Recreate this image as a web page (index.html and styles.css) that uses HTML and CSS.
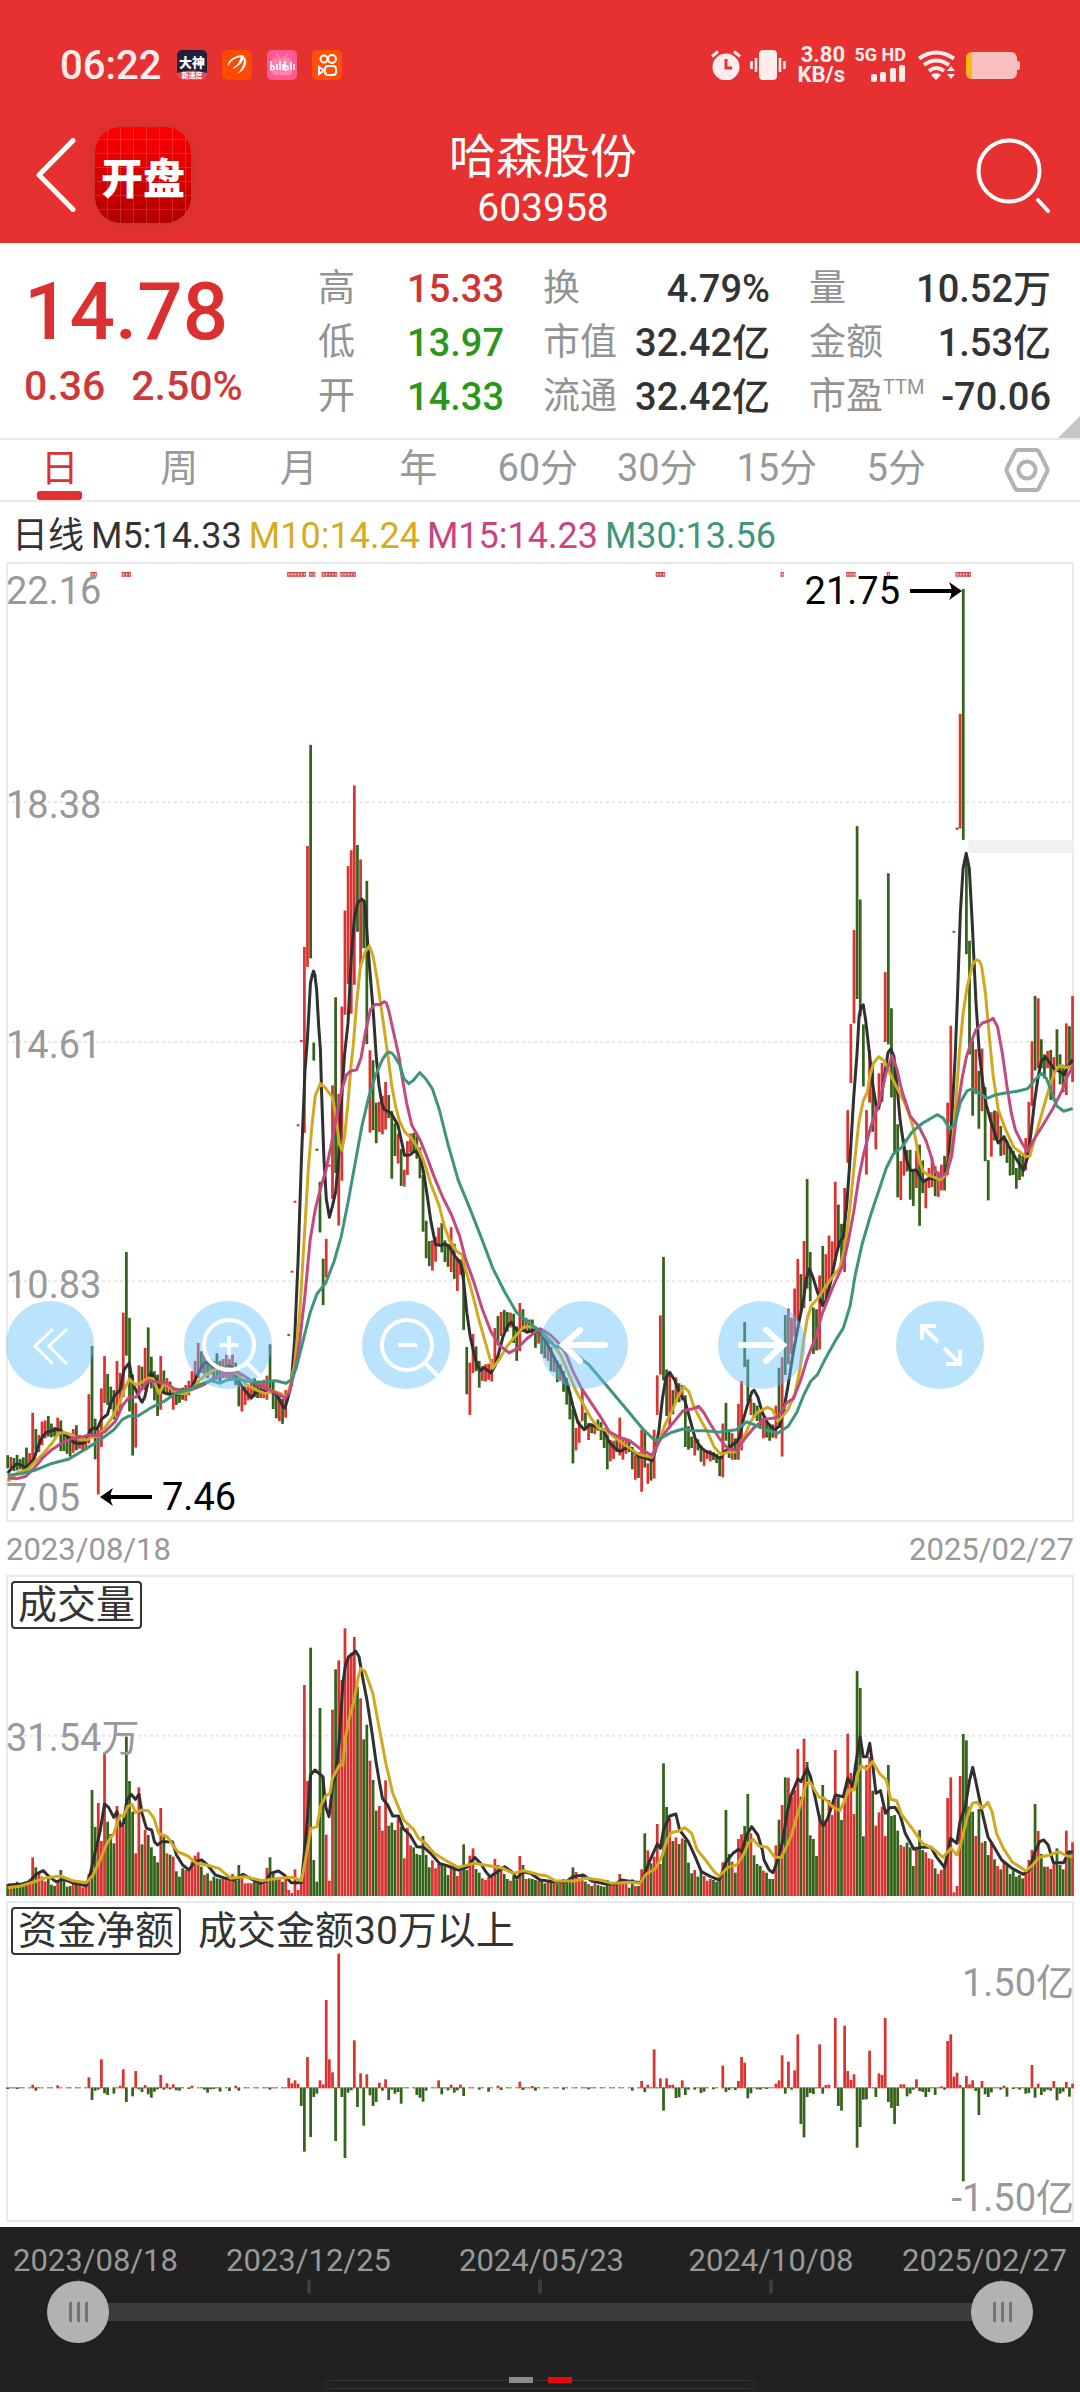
FILE: index.html
```html
<!DOCTYPE html>
<html lang="zh-CN">
<head>
<meta charset="utf-8">
<meta name="viewport" content="width=device-width, initial-scale=1">
<title>哈森股份 603958</title>
<link rel="stylesheet" href="styles.css">
</head>
<body>
<header class="top">
  <div class="status">
    <span class="clock">06:22</span>
    <div class="apps">
      <svg width="30" height="30" viewBox="0 0 30 30"><rect width="30" height="30" rx="5" fill="#20203c"/><path d="M0 23q15-5 30 0v2a5 5 0 0 1-5 5H5a5 5 0 0 1-5-5z" fill="#e5484d"/><text x="15" y="17" class="mini-lg">大神</text><text x="15" y="28" class="mini-sm">新速度</text></svg>
      <svg width="30" height="30" viewBox="0 0 30 30"><rect width="30" height="30" rx="5" fill="#ff4a00"/><g fill="#fff"><path d="M6 14Q8 7 19 5q2 0 0 2-9 1-13 9z"/><path d="M11 18Q18 13 19 6l2-1q2 1 0 5-3 6-10 9z"/><path d="M15 24q7-6 7-17 3 2 2 7-2 7-9 10z"/></g></svg>
      <svg width="30" height="30" viewBox="0 0 30 30"><rect width="30" height="30" rx="5" fill="#ff5a93"/><rect x="5" y="8" width="20" height="17" rx="4" fill="#ff82ae"/><path d="M9 4l4 4M21 4l-4 4" stroke="#ff82ae" stroke-width="2"/><path d="M4 11v9q4 0 3-3-1-2-3 0M10 14v6M13 11v9M16 14v6M18 11v9q4 0 3-3-1-2-3 0M24 12v8M27 14v6" fill="none" stroke="#fff" stroke-width="1.600"/></svg>
      <svg width="30" height="30" viewBox="0 0 30 30"><rect width="30" height="30" rx="5" fill="#ff500a"/><g fill="none" stroke="#fff" stroke-width="2"><circle cx="12" cy="9" r="3.500"/><circle cx="20" cy="9" r="4"/><rect x="13" y="16" width="11" height="9" rx="3"/><path d="M7 17v7l5-3.500z"/></g></svg>
    </div>
    <div class="system">
      <svg class="i-alarm" width="30" height="30" viewBox="0 0 30 30"><circle cx="15" cy="17" r="13.500" fill="#ffecec"/><path d="M1 6.500l6-5M29 6.500l-6-5" stroke="#ffecec" stroke-width="3"/><path d="M15 9v9h6" fill="none" stroke="#e63232" stroke-width="3"/></svg>
      <svg class="i-vibrate" width="36" height="30" viewBox="0 0 36 30"><rect x="9" width="18" height="30" rx="4" fill="#ffecec"/><path d="M1.500 11v8M6 8v14M30 8v14M34.500 11v8" stroke="#ffecec" stroke-width="2.600"/></svg>
      <p class="rate">3.80<br>KB/s</p>
      <div class="signal"><span>5G HD</span>
        <svg width="36" height="17" viewBox="0 0 36 17" fill="#ffecec"><rect x="1" y="9" width="6" height="8" rx="2"/><rect x="10" y="7" width="6" height="10" rx="2"/><rect x="20" y="3" width="6" height="14" rx="2"/><rect x="29" width="6" height="17" rx="2"/></svg></div>
      <svg class="i-wifi" width="37" height="30" viewBox="0 0 37 30"><g fill="none" stroke="#ffecec" stroke-width="4"><path d="M1 8.500q17-12 35 0M6 15q12-9 25 0M11 21q7-6 15 0"/></g><path d="M13 25q5-4 10 0l-5 5zM29 21l4-5 4 5zM29 24h8l-4 5z" fill="#ffecec"/></svg>
      <svg width="54" height="27" viewBox="0 0 54 27"><rect width="51" height="27" rx="6" fill="#f7bfc0"/><path d="M51 9h1q2 0 2 2v5q0 2-2 2h-1z" fill="#f7bfc0"/><path d="M6 0v27a6 6 0 0 1-6-6V6a6 6 0 0 1 6-6z" fill="#fdb515"/></svg>
    </div>
  </div>
  <div class="title-row">
    <div class="title-left">
      <button class="plain" aria-label="返回"><svg width="40" height="74" viewBox="0 0 40 74"><path d="M37 2.500L3 37l34 34.500" fill="none" stroke="#fff" stroke-width="5" stroke-linecap="round" stroke-linejoin="round"/></svg></button>
      <button class="logo">开盘</button>
    </div>
    <div class="title"><h1>哈森股份</h1><p>603958</p></div>
    <button class="plain search" aria-label="搜索"><svg width="74" height="78" viewBox="0 0 74 78"><g fill="none" stroke="#fff" stroke-linecap="round"><circle cx="33" cy="35" r="30.500" stroke-width="4"/><path d="M62 64l10 11" stroke-width="4"/></g></svg></button>
  </div>
</header>

<section class="quote">
  <div class="price"><strong>14.78</strong><p><span>0.36</span><span>2.50%</span></p></div>
  <dl><div><dt>高</dt><dd class="up">15.33</dd></div><div><dt>低</dt><dd class="down">13.97</dd></div><div><dt>开</dt><dd class="down">14.33</dd></div></dl>
  <dl><div><dt>换</dt><dd>4.79%</dd></div><div><dt>市值</dt><dd>32.42亿</dd></div><div><dt>流通</dt><dd>32.42亿</dd></div></dl>
  <dl><div><dt>量</dt><dd>10.52万</dd></div><div><dt>金额</dt><dd>1.53亿</dd></div><div><dt>市盈<sup>TTM</sup></dt><dd>-70.06</dd></div></dl>
</section>

<nav class="tabs">
  <button class="active">日</button><button>周</button><button>月</button><button>年</button><button>60分</button><button>30分</button><button>15分</button><button>5分</button>
  <button class="settings" aria-label="设置"><svg width="46" height="46" viewBox="0 0 46 46" fill="none" stroke="#b2b2b2" stroke-width="4"><path d="M14 3h18q2 0 3 2l8 16q1 2 0 4l-8 16q-1 2-3 2H14q-2 0-3-2L3 25q-1-2 0-4l8-16q1-2 3-2z"/><circle cx="23" cy="23" r="8.500"/></svg></button>
</nav>

<main>
  <p class="legend"><span>日线</span><span>M5:14.33</span><span class="m10">M10:14.24</span><span class="m15">M15:14.23</span><span class="m30">M30:13.56</span></p>

  <section class="panel panel-price">
    <svg id="price" class="plot" viewBox="17 -1330 3101 2788" preserveAspectRatio="none"></svg>
    <span class="tag p1">22.16</span><span class="tag p2">18.38</span><span class="tag p3">14.61</span><span class="tag p4">10.83</span><span class="tag p5">7.05</span>
    <span class="note high">21.75 <svg width="53" height="20" viewBox="0 0 53 20"><path d="M0 10h48" stroke="#000" stroke-width="4"/><path d="M39 1l13 9-13 9q5-9 0-18z" fill="#000"/></svg></span>
    <span class="note low"><svg width="52" height="20" viewBox="0 0 52 20"><path d="M52 10H5" stroke="#000" stroke-width="4"/><path d="M13 1L0 10l13 9q-5-9 0-18z" fill="#000"/></svg> 7.46</span>
    <div class="tools">
      <button aria-label="后退"><svg viewBox="0 0 88 88"><path d="M47 28L29 45l18 18M61 28L43 45l18 18" stroke-width="3"/></svg></button>
      <button aria-label="放大"><svg viewBox="0 0 88 88"><circle cx="45" cy="44" r="25" stroke-width="4"/><path d="M63 62l15 15M45 35v19M35.500 44h19" stroke-width="4"/></svg></button>
      <button aria-label="缩小"><svg viewBox="0 0 88 88"><circle cx="45" cy="44" r="25" stroke-width="4"/><path d="M63 62l15 15M36 44h19" stroke-width="4"/></svg></button>
      <button aria-label="左移"><svg viewBox="0 0 88 88"><path d="M65 44H23M40 29L23 44l17 16" stroke-width="6" stroke-linecap="round"/></svg></button>
      <button aria-label="右移"><svg viewBox="0 0 88 88"><path d="M23 44h42M48 29l17 15-17 16" stroke-width="6" stroke-linecap="round"/></svg></button>
      <button aria-label="全屏"><svg viewBox="0 0 88 88"><path d="M42 41L26 25M26 39V25h14M48 47l16 16M64 49v14H50" stroke-width="4"/></svg></button>
    </div>
  </section>

  <p class="dates"><time>2023/08/18</time><time>2025/02/27</time></p>

  <section class="panel panel-volume">
    <svg id="volume" class="plot" viewBox="17 45 3101 963" preserveAspectRatio="none"></svg>
    <h2 class="caption"><button>成交量</button></h2>
    <span class="tag v1">31.54万</span>
  </section>

  <section class="panel panel-flow">
    <svg id="flow" class="plot" viewBox="17 33 3101 963" preserveAspectRatio="none"></svg>
    <h2 class="caption"><button>资金净额</button><span>成交金额30万以上</span></h2>
    <span class="tag f1">1.50亿</span><span class="tag f2">-1.50亿</span>
  </section>
</main>

<footer class="range">
  <div class="range-dates"><time>2023/08/18</time><time>2023/12/25</time><time>2024/05/23</time><time>2024/10/08</time><time>2025/02/27</time></div>
  <div class="ticks"><i></i><i></i><i></i><i></i><i></i></div>
  <div class="slider">
    <input type="range" min="0" max="100" value="0" aria-label="开始日期">
    <input type="range" min="0" max="100" value="100" aria-label="结束日期">
  </div>
  <div class="pager"><i></i><i class="on"></i></div>
  <div class="home-bar"></div>
</footer>
<script src="chart.js"></script>
</body>
</html>
```
FILE: styles.css
```css
* { box-sizing: border-box; }
body { margin: 0; background: #fff; color: #333; font-family: Roboto, "Noto Sans CJK SC", sans-serif; }
h1, h2, p, dl, dd { margin: 0; font-weight: 400; }
button { font: inherit; color: inherit; background: none; border: 0; padding: 0; }
svg { display: block; flex: none; }

.top { background: #e73131; color: #fff; }
.status { display: flex; align-items: center; height: 127px; padding: 3px 60px 0 60px; color: #ffecec; }
.clock { width: 117px; font-size: 40px; font-weight: 500; }
.apps { display: flex; gap: 15px; }
.mini-lg { font-size: 13px; font-weight: 900; fill: #fff; text-anchor: middle; }
.mini-sm { font-size: 7px; font-weight: 700; fill: #fff; text-anchor: middle; }
.system { display: flex; align-items: center; margin-left: auto; }
.i-alarm { margin-right: 9px; }
.i-vibrate { margin-right: 11px; }
.rate { width: 48px; text-align: right; font-size: 22px; line-height: 20px; font-weight: 700; }
.signal { display: flex; flex-direction: column; align-items: flex-end; gap: 3px; margin: 0 12px 0 11px; width: 50px; font-size: 18px; line-height: 14px; font-weight: 700; white-space: nowrap; }
.i-wifi { margin-right: 11px; }
.title-row { display: grid; grid-template-columns: 1fr auto 1fr; align-items: start; height: 116px; padding: 0 30px 0 36px; }
.title-left { display: flex; align-items: center; gap: 19px; }
.logo { width: 96px; height: 96px; border-radius: 26px; font-size: 42px; font-weight: 900; color: #fff;
  background: repeating-linear-gradient(90deg, transparent 0 12px, rgba(255,255,255,.16) 12px 13px), repeating-linear-gradient(0deg, transparent 0 13px, rgba(255,255,255,.14) 13px 14px), linear-gradient(#ff0000, #b00000);
  box-shadow: 0 0 18px rgba(100,60,60,.3); }
.title { padding-top: 4px; text-align: center; }
.title h1 { font-size: 47px; line-height: 52px; }
.title p { font-size: 39px; line-height: 50px; }
.search { justify-self: end; margin-top: 9px; }

.quote { position: relative; display: grid; grid-template-columns: 255fr 186fr 227fr 242fr; column-gap: 39px; height: 197px; padding: 19px 29px 0 24px; border-bottom: 2px solid #e9e9e9; }
.quote::after { content: ""; position: absolute; right: 0; bottom: 0; border: solid transparent; border-width: 0 0 22px 22px; border-bottom-color: #c6c6c6; }
.price { padding-top: 8px; color: #dc2f2f; }
.price strong { display: block; font-size: 80px; line-height: 84px; font-weight: 500; }
.price p { display: flex; gap: 26px; padding-top: 4px; font-size: 41px; line-height: 56px; font-weight: 500; color: #d03838; }
.quote dl div { display: flex; justify-content: space-between; height: 54px; line-height: 54px; white-space: nowrap; }
dt { font-size: 37px; color: #939393; }
sup { font-size: 20px; line-height: 20px; vertical-align: 15px; }
dd { font-size: 38px; font-weight: 500; }
dd.up { color: #d03535; }
dd.down { color: #2b961b; }

.tabs { display: grid; grid-template-columns: repeat(8, 239fr) 248fr; height: 62px; border-bottom: 2px solid #e9e9e9; font-size: 38px; line-height: 56px; color: #999; }
.tabs button { position: relative; white-space: nowrap; line-height: 56px; height: 60px; padding-bottom: 4px; }
.tabs .active { color: #dc3232; }
.tabs .active::after { content: ""; position: absolute; left: calc(50% - 23px); bottom: 0; width: 45px; height: 9px; border-radius: 3px; background: #e03030; }
.tabs .settings { display: grid; place-items: center; padding: 0 0 0 17px; }

.legend { display: flex; gap: 7px; height: 60px; padding: 7px 12px 0; font-size: 36px; line-height: 54px; white-space: nowrap; }
.m10 { color: #d6ac22; }
.m15 { color: #c9457f; }
.m30 { color: #3e967c; }

.panel { position: relative; margin: 0 6px; }
.panel::before { content: ""; position: absolute; inset: 0; border: 2px solid #e9e9e9; }
.panel-price { height: 960px; }
.panel-volume { height: 321px; }
.panel-volume::before { border-bottom: 0; }
.panel-flow { height: 321px; margin-top: 5px; }
.plot { position: absolute; inset: 0; width: 100%; height: 100%; }
.plot .rise { fill: #d93432; }
.plot .fall { fill: #34631a; }
.plot .flag { fill: #cc4040; }
.plot .pin { fill: #ffdada; }
.plot .gap { fill: #f1f1f1; }
.plot polyline { fill: none; stroke-width: 3px; stroke-linejoin: round; vector-effect: non-scaling-stroke; }
.plot .guide { stroke: #e6e6e6; stroke-width: 2px; stroke-dasharray: 3px 3px; vector-effect: non-scaling-stroke; }
.ma5 { stroke: #303030; }
.ma10 { stroke: #d0a921; }
.ma15 { stroke: #c4497f; }
.ma30 { stroke: #3f957b; }

.tag { position: absolute; left: 0; font-size: 38px; line-height: 44px; color: #999; white-space: nowrap; }
.p1 { top: 7px; }
.p2 { top: 22%; margin-top: 10px; }
.p3 { top: 48%; }
.p4 { top: 73%; }
.p5 { bottom: 2px; }
.v1 { top: 141px; }
.f1, .f2 { left: auto; right: 0; }
.f1 { top: 60px; }
.f2 { bottom: 2px; }
.note { position: absolute; display: flex; align-items: center; gap: 10px; font-size: 38px; line-height: 44px; color: #000; }
.high { top: 7px; right: 111px; }
.low { bottom: 3px; left: 94px; }
.tools { position: absolute; left: 0; right: 0; top: 739px; display: flex; gap: 90px; }
.tools button { width: 88px; height: 88px; border-radius: 50%; background: rgba(102,193,253,.45); overflow: hidden; }
.tools svg { fill: none; stroke: #fff; }

.dates { display: flex; justify-content: space-between; height: 53px; padding: 0 6px; font-size: 31px; line-height: 56px; color: #999; }
.caption { position: relative; display: flex; align-items: center; gap: 17px; padding: 6px 5px 0; font-size: 39px; line-height: 44px; }
.caption button { height: 48px; padding: 0 5px; border: 2px solid #333; border-radius: 4px; line-height: 42px; }

.range { margin-top: 5px; padding: 15px 0 3px; background: #212121; color: #999; }
.range-dates { display: grid; grid-template-columns: 189fr 213fr 253fr 206fr 193fr; padding: 0 13px; font-size: 31px; line-height: 37px; text-align: center; }
.range-dates :first-child { text-align: left; }
.range-dates :last-child { text-align: right; }
.ticks { display: flex; justify-content: space-between; margin: 0 76px; }
.ticks i { width: 4px; height: 15px; border-radius: 2px; background: #3c3c3c; }
.slider { position: relative; height: 62px; margin: -13px 47px 0; }
.slider::before { content: ""; position: absolute; left: 31px; right: 31px; top: 22px; height: 18px; background: #3b3b3b; }
.slider input { position: absolute; inset: 0; width: 100%; height: 62px; margin: 0; appearance: none; background: none; pointer-events: none; }
.slider input::-webkit-slider-thumb { appearance: none; width: 62px; height: 62px; border: 0; border-radius: 50%; pointer-events: auto;
  background: linear-gradient(90deg, #757575 0 3px, transparent 3px 8px, #757575 8px 11px, transparent 11px 16px, #757575 16px) center / 19px 20px no-repeat #b2b2b2; }
.pager { position: relative; display: flex; justify-content: center; gap: 15px; margin-top: 34px; }
.pager i { width: 24px; height: 6px; background: #8c8c8c; }
.pager .on { background: #e60c0c; }
.home-bar { width: 40%; height: 9px; margin: -3px auto 0; border: 1px solid #343434; border-radius: 5px; }
```
FILE: chart.js
```js
// Price bars, one per trading day: r = rise, g = fall, then the high and low.
// Levels are plot steps below 14.96 yuan, 184 steps to the yuan.
const DAYS = `
g1264,1302 r1269,1300 g1272,1310 g1263,1308 g1275,1305 g1270,1312 g1242,1308 r1258,1305 r1141,1290 g1188,1250
r1205,1255 r1166,1235 r1163,1215 g1150,1210 g1172,1212 g1182,1210 r1155,1207 g1163,1252 g1200,1252 g1205,1260
g1208,1268 r1188,1257 g1177,1250 r1205,1245 r1210,1250 r1205,1250 r1087,1230 g947,1210 g1158,1276 r1190,1378
r1070,1240 r976,1112 g1028,1118 g1065,1130 g1075,1160 r990,1150 r1025,1130 r850,1095 g674,975 g865,1137
g1030,1265 r1112,1242 r1003,1095 g1007,1075 r952,1075 g893,1040 g978,1070 g1020,1105 g1030,1150 r976,1132
g1018,1085 r1040,1090 g1050,1090 r1065,1132 g1068,1118 g1070,1112 g1068,1103 r1060,1106 r1048,1090 r1020,1075
r990,1055 r938,1040 g962,1025 r970,1030 g990,1040 r985,1030 g990,1050 g968,1045 g990,1055 r985,1040
r972,1040 r985,1045 r972,1040 g995,1060 g1030,1122 r1070,1137 r1065,1118 r1060,1105 r1045,1100 g1040,1095
g1050,1098 r1055,1098 r1045,1098 r1033,1103 g942,1070 g1045,1130 g1080,1157 r1090,1165 g1100,1173 r1075,1155
r912,918 r728,734 r525,531 r303,309 r58,64 r-212,328 r-505,-154 g-799,-179 g66,118 g374,380
g470,617 g693,828 r636,748 r420,426 r190,520 g-66,445 r215,597 r-39,467 r-318,-15 r-447,-105
r-493,-18 r-681,-102 g-508,-256 r-466,-150 g-348,-208 g-404,70 r88,327 g117,320 g240,358 r238,325
r220,332 r180,318 g218,285 g265,461 g300,395 r330,417 g375,482 r435,484 r352,450 r330,385
g328,385 g335,403 g370,460 g450,615 g583,692 g642,715 r640,728 r630,702 r603,655 g590,675
g640,703 g650,717 r602,732 g650,752 r690,787 r695,740 g690,900 g950,1087 r995,1147 r912,1025
g948,1020 g990,1068 r1005,1048 r1000,1050 r998,1045 r985,1050 r895,1005 g860,945 r848,918 g842,905
g848,905 r850,893 g853,938 g890,990 r822,962 g840,905 r865,905 g870,905 g870,910 g890,952
r895,940 g905,970 g900,982 r930,990 g950,1020 r975,1022 g990,1052 r1000,1048 g1020,1080 g1040,1117
g1080,1160 g1130,1288 r1185,1250 r1165,1228 r1072,1165 g1140,1190 r1170,1220 g1172,1200 r1180,1203 g1160,1193
g1168,1220 g1185,1243 g1205,1305 r1220,1282 r1222,1275 g1205,1255 r1155,1265 r1220,1277 r1220,1260 g1225,1255
g1240,1305 r1265,1335 g1255,1330 r1190,1370 g1190,1300 r1288,1347 g1270,1338 r1190,1332 r1032,1147 r858,1030
g688,1047 g1015,1150 r1030,1180 g1075,1145 r1038,1108 g1055,1110 r1060,1105 g1090,1240 g1180,1248 g1210,1243
r1218,1265 g1218,1250 g1235,1283 r1250,1295 r1250,1275 r1250,1282 g1255,1278 g1260,1287 g1270,1325 r1172,1328
g1112,1222 g1190,1272 r1200,1277 g1215,1277 r1115,1277 r1048,1250 g877,1008 g986,1110 r1100,1147 g1112,1155
g1120,1165 g1140,1187 r1155,1215 g1160,1213 g1175,1222 g1175,1213 r1120,1215 g1010,1185 r980,1268 g857,1031
r838,1000 r865,970 r780,920 r694,875 g738,850 r642,837 g462,780 g674,817 g835,970 g840,960
r742,957 g656,830 r680,812 r626,780 r643,745 r470,690 g536,660 g592,710 r488,732 r262,415
r12,183 r-261,10 g-563,-61 g-350,-10 g13,193 r262,449 r88,240 g130,325 r235,376 r155,260
r125,238 r-139,64 g-426,71 g-34,225 g135,385 g303,515 r410,523 r345,452 g378,440 g377,522
g435,540 r380,488 g362,598 g408,503 r460,547 r430,488 r400,485 g425,512 r440,514 r420,495
g395,495 r240,450 r17,300 r-259,-253 r-559,-552 r-889,-556 g-1252,-523 g-465,-191 g-230,100 g60,278
r85,215 g148,316 r83,265 g195,410 g407,524 r268,397 g263,350 r265,345 g308,395 r335,392
g350,415 g370,452 g380,450 g430,490 g390,465 g395,455 r343,437 r238,385 r62,250 g-70,147
r-63,140 g56,140 g100,170 r90,140 g87,232 r108,235 g27,135 g100,187 g130,210 r10,218
g18,130 r-70,180`.trim().split(/\s+/);

const VOLUME = `
972 972 975 965 972 972 970 958 892 922 940 950 964 957 974 978 963 930 962 980
978 960 965 978 982 978 942 690 801 729 843 579 785 822 850 738 790 795 530 663
755 880 682 853 810 825 862 888 907 744 830 880 884 890 934 950 925 930 932 905
887 877 920 945 940 962 950 955 957 955 955 955 942 962 915 950 970 969 970 965
970 970 970 924 892 940 955 957 965 957 990 999 928 990 967 375 663 263 900 965
444 650 824 962 449 328 301 360 205 290 278 231 380 415 538 494 602 660 752 738
812 661 797 788 810 775 800 895 803 856 862 882 885 828 885 922 901 925 912 915
920 945 925 912 948 925 853 930 887 865 927 938 955 960 950 948 897 915 930 942
957 962 948 960 888 915 957 955 957 960 962 960 970 965 962 968 970 965 957 965
960 922 936 955 948 965 972 978 970 975 978 980 960 970 975 968 942 965 970 983
958 978 978 928 820 871 910 890 792 912 610 741 775 843 832 852 835 840 908 940
930 950 935 948 962 957 960 965 955 907 750 882 905 938 837 823 798 702 820 886
912 918 932 938 957 957 856 779 735 652 653 710 690 567 710 536 606 826 837 888
765 675 785 720 765 570 712 780 700 521 639 762 333 384 829 615 590 692 797 757
740 828 615 768 765 812 855 860 848 862 918 860 810 870 877 895 898 925 942 930
915 714 652 997 978 648 522 541 740 755 828 747 848 843 885 850 898 918 928 905
910 942 932 950 945 955 940 900 870 732 813 882 920 920 927 910 865 915 928 812
875 847`.trim().split(/\s+/).map(Number);

// Net flow by day index; days that are not listed are close to zero.
const FLOW = {};
`0:-4 3:-4 8:9 9:-9 16:7 26:31 27:-37 28:-9 29:-6 30:85 31:-17 32:-22 34:-18 36:6 37:55 38:-43 40:-26 41:50 42:-5
43:-13 44:8 45:-20 46:-30 47:-12 48:-5 49:38 50:-6 51:13 52:-5 53:10 54:-8 55:-9 58:-4 59:6 63:-6 64:-15 65:-5
66:-4 68:-12 71:-10 73:6 74:-9 84:-6 90:29 91:13 92:22 93:12 94:-55 95:-192 96:92 97:-148 98:-28 99:-18 100:22
101:10 102:263 103:85 104:46 105:-160 106:402 107:-28 108:-211 109:-15 110:-8 111:142 112:-58 113:43 114:-114
115:40 116:-23 117:-55 118:-43 119:15 120:-9 121:25 122:-37 123:-6 124:-18 125:-13 126:-48 131:-22 132:-30
133:-42 134:-9 138:22 139:-20 141:-8 142:9 143:-15 144:-8 145:9 146:-25 151:-6 154:-12 157:6 158:-7 164:18
165:-7 168:5 169:-9 178:-6 186:-5 200:-9 203:20 204:-13 205:9 207:115 209:28 210:-69 211:28 212:8 213:9
214:-31 215:-29 216:22 217:-22 218:-6 220:-6 222:-16 223:-12 226:-5 229:66 230:-13 231:-7 233:-7 234:20 235:92
236:75 237:-32 238:-17 240:-5 241:-6 243:-4 246:12 247:22 248:97 249:-18 250:78 251:-6 252:52 253:160 254:-109
255:-149 256:-28 257:-16 258:-19 260:130 261:-18 262:8 263:9 265:209 266:-55 267:-69 268:186 269:50 270:23
271:40 272:-180 273:-118 274:-36 275:-35 276:111 278:-28 279:43 280:38 281:209 282:-43 283:-61 284:-109
285:-55 286:10 287:10 288:-26 289:-18 290:-6 291:25 292:-10 293:-13 294:-28 295:-13 297:-22 299:4 300:-6
301:140 302:160 303:33 304:45 305:8 306:-281 307:35 308:10 309:22 310:-10 311:-82 312:20 313:-20 314:-28
315:-14 318:-6 319:6 320:-27 322:-4 324:-6 326:-18 327:-16 328:68 329:-30 330:12 331:-22 332:-12 333:-6
334:-9 335:20 336:-38 337:-18 338:-12 339:17 340:-27 341:12`.split(/\s+/).forEach(p => {
  const [i, v] = p.split(":").map(Number);
  FLOW[i] = v;
});

// Average lines come in two halves; the second half counts x from the middle (1568).
const HALF = 1568;
const PRICE_LINES = {
  ma5: [`22,1316 35,1300 48,1289 60,1292 72,1300 85,1290 98,1275 108,1245 120,1215 133,1198 150,1193 167,1188 176,1192 190,1205 205,1220 220,1230 240,1230 250,1222 262,1190 272,1185 282,1188 294,1160 312,1145 320,1115 333,1090 348,1075 360,1015 375,996 384,1050 400,1090 412,1110 420,1095 430,1050 438,1025 450,1040 460,1060 475,1083 493,1087 512,1088 530,1085 545,1080 560,1060 575,1025 590,1000 600,993 615,1005 630,1015 650,1010 666,1005 680,1015 693,1050 710,1075 729,1098 740,1085 755,1075 775,1082 793,1080 805,1092 820,1120 827,1127 835,1100 845,1060 855,930 865,700 875,400 885,150 892,58 901,-106 906,-130 910,-142 914,-130 919,-87 925,19 930,87 933,200 940,400 947,520 956,573 965,540 974,500 983,400 990,250 1000,100 1010,10 1019,-174 1028,-290 1034,-325 1040,-343 1050,-351 1057,-345 1060,-329 1065,-252 1074,-136 1083,-29 1092,106 1100,190 1108,240 1115,260 1135,270 1155,305 1165,350 1174,393 1190,392 1205,380 1219,395 1230,445 1240,510 1250,580 1264,652 1280,655 1292,650 1305,660 1320,685 1338,708 1346,760 1355,850 1365,920 1375,965 1385,1005 1395,1018 1405,1010 1425,1025 1437,1005 1447,970 1460,920 1475,885 1485,878 1495,895 1505,905 1518,900 1530,907 1545,902`,
    `0,905 20,940 40,980 60,1015 80,1060 95,1120 110,1170 128,1190 145,1175 165,1182 183,1190 200,1225 215,1242 232,1253 250,1242 265,1245 285,1268 300,1270 325,1280 335,1250 345,1190 355,1100 365,1040 376,1023 390,1045 405,1085 420,1105 435,1160 450,1215 465,1240 480,1252 500,1260 523,1273 535,1255 550,1240 570,1225 580,1210 590,1160 603,1115 615,1080 621,1075 632,1095 645,1140 660,1170 680,1190 695,1180 705,1145 720,1060 735,965 750,885 765,810 773,750 782,723 793,750 805,790 820,830 830,815 845,755 860,680 870,645 880,630 890,540 900,400 910,230 920,97 926,-10 932,-39 938,-44 945,0 957,106 966,190 975,245 981,258 990,230 1000,160 1010,95 1018,84 1027,105 1035,180 1045,290 1055,360 1065,410 1075,437 1092,436 1103,455 1112,470 1130,460 1150,463 1175,455 1187,400 1195,290 1205,106 1212,-77 1220,-310 1228,-440 1237,-484 1246,-440 1255,-271 1265,-58 1275,97 1285,180 1295,245 1310,300 1330,357 1347,340 1360,365 1380,400 1403,437 1415,400 1425,330 1435,240 1445,170 1455,120 1467,107 1480,125 1495,145 1510,150 1520,160 1530,140 1546,115`],
  ma10: [`22,1340 50,1315 80,1305 100,1285 125,1260 150,1230 170,1200 185,1198 210,1205 230,1218 250,1220 265,1212 285,1208 300,1190 325,1155 345,1115 360,1075 375,1043 393,1060 410,1053 430,1040 445,1042 455,1070 462,1085 475,1058 485,1060 500,1075 515,1085 540,1085 560,1070 580,1045 610,1022 640,1010 666,1012 690,1030 715,1060 745,1075 770,1085 795,1078 815,1085 828,1097 840,1070 855,1000 870,850 885,600 895,430 905,310 915,220 930,185 945,198 965,225 975,280 985,360 992,378 1000,340 1010,240 1020,120 1025,77 1035,-48 1046,-155 1060,-198 1072,-215 1083,-184 1095,-116 1110,-10 1125,97 1137,190 1148,250 1160,295 1175,325 1195,345 1215,375 1230,410 1250,475 1275,540 1290,600 1305,640 1325,672 1342,682 1350,720 1370,790 1390,870 1410,940 1430,1012 1450,985 1470,950 1490,925 1520,892 1545,890`,
    `0,900 30,930 60,975 80,1020 105,1080 130,1125 150,1160 170,1185 190,1192 220,1215 250,1237 280,1258 300,1265 325,1270 345,1220 365,1170 385,1130 400,1095 417,1065 432,1080 445,1120 465,1160 485,1195 505,1240 525,1262 545,1255 565,1255 580,1240 595,1205 612,1165 630,1140 660,1125 675,1132 690,1165 705,1150 720,1130 740,1085 755,1010 765,930 775,870 787,830 805,810 825,780 850,745 870,720 885,660 900,540 912,420 925,300 938,235 950,210 957,165 968,125 983,107 1000,120 1020,165 1040,205 1060,245 1080,300 1090,345 1100,405 1112,440 1130,452 1145,457 1160,465 1180,450 1195,380 1207,240 1217,97 1228,-19 1240,-97 1255,-160 1263,-172 1270,-174 1276,-170 1282,-155 1293,-77 1305,58 1315,160 1330,260 1350,315 1375,370 1395,385 1410,397 1422,395 1440,330 1460,260 1480,190 1495,150 1507,133 1525,138 1546,135`],
  ma15: [`22,1330 50,1332 75,1325 100,1300 125,1270 150,1248 180,1228 210,1215 240,1210 260,1205 285,1207 305,1195 335,1165 355,1120 375,1095 395,1095 415,1065 430,1048 460,1052 485,1055 505,1072 530,1078 560,1072 590,1060 620,1040 650,1030 685,1020 710,1035 740,1055 765,1065 785,1075 805,1085 828,1098 840,1080 858,1010 870,930 885,800 900,640 915,550 930,490 945,440 960,370 975,290 990,210 1005,160 1018,148 1035,145 1048,110 1060,39 1075,-29 1088,-45 1103,-45 1115,-53 1121,-50 1128,-29 1145,48 1158,106 1167,165 1180,240 1195,305 1220,350 1240,400 1260,455 1285,515 1310,565 1335,630 1350,690 1375,760 1400,840 1425,905 1450,945 1478,967 1500,955 1530,925 1555,905`,
    `0,897 30,915 60,945 75,970 95,1020 120,1070 150,1115 180,1160 200,1195 230,1212 260,1222 290,1245 325,1265 345,1225 365,1195 390,1165 415,1135 440,1130 460,1122 475,1140 495,1175 520,1215 545,1245 570,1250 595,1215 620,1185 650,1160 685,1155 700,1140 715,1112 735,1100 755,1050 775,985 800,920 820,850 850,775 880,710 895,640 910,560 925,460 940,385 960,310 985,240 1005,150 1022,104 1035,140 1050,205 1075,280 1100,310 1120,350 1135,395 1145,435 1160,455 1180,445 1195,395 1210,270 1225,170 1237,110 1250,68 1265,29 1285,8 1303,3 1315,-5 1328,20 1342,97 1355,190 1368,270 1380,320 1400,360 1415,382 1435,345 1460,305 1490,255 1515,205 1530,165 1546,135`],
  ma30: [`22,1322 60,1318 100,1308 150,1288 200,1275 250,1245 290,1220 330,1190 355,1160 375,1150 400,1150 440,1125 475,1108 510,1085 550,1072 590,1055 615,1048 638,1055 660,1045 690,1042 720,1050 760,1052 800,1048 830,1055 845,1045 860,1010 880,930 900,850 920,795 945,765 970,700 990,630 1010,530 1030,420 1050,310 1070,225 1090,160 1110,115 1122,97 1130,93 1138,97 1145,105 1160,130 1172,170 1187,185 1200,175 1218,153 1235,170 1255,200 1275,260 1300,360 1330,465 1365,550 1400,640 1430,720 1465,790 1500,850 1530,875`,
    `0,905 40,945 70,955 100,970 140,1000 200,1070 250,1130 300,1190 333,1221 350,1215 380,1198 415,1188 440,1193 480,1193 520,1197 570,1190 600,1167 625,1177 655,1190 690,1200 720,1180 745,1140 765,1090 785,1050 805,1030 830,980 855,935 880,895 900,830 915,740 935,650 960,565 985,490 1005,430 1025,390 1050,370 1080,325 1110,300 1153,275 1170,285 1190,317 1205,300 1220,240 1240,205 1255,200 1275,212 1297,228 1320,218 1350,212 1385,207 1415,200 1435,175 1455,155 1470,170 1485,210 1500,250 1520,265 1546,257`]
};
const VOLUME_LINES = {
  ma5: [`22,975 60,973 85,965 105,942 125,932 140,948 162,965 185,958 215,970 250,977 262,940 275,880 290,815 303,732 315,742 330,772 339,755 350,798 358,790 368,720 380,703 393,718 403,703 412,760 425,805 440,810 448,845 457,855 470,845 500,845 512,885 530,915 548,930 565,905 585,900 602,915 625,945 655,955 680,960 705,943 735,960 755,970 770,965 785,940 808,933 825,945 845,968 875,968 883,880 892,780 901,645 914,630 937,650 945,740 955,770 965,680 975,640 985,540 995,370 1003,315 1012,290 1022,283 1032,273 1042,290 1052,350 1065,420 1080,520 1092,610 1102,670 1110,715 1125,735 1140,768 1157,768 1170,805 1190,825 1210,860 1230,862 1250,880 1275,910 1300,918 1330,930 1355,922 1378,892 1395,910 1410,935 1422,950 1440,938 1465,920 1485,935 1500,955 1518,935 1540,940`,
    `0,960 40,965 75,965 95,950 125,945 150,963 190,972 220,972 235,960 290,968 300,950 315,910 340,852 349,865 358,810 376,768 394,762 405,810 430,845 450,890 468,935 495,950 520,960 540,905 560,880 576,868 585,875 600,825 614,800 632,825 645,870 650,900 665,930 676,938 690,900 705,840 715,770 727,710 748,657 757,665 775,625 785,650 800,720 812,780 822,797 835,775 857,705 880,710 893,655 908,680 915,620 929,530 938,590 948,590 957,550 965,610 975,700 988,692 1003,760 1015,743 1030,742 1045,765 1060,820 1085,868 1105,862 1135,862 1150,890 1174,922 1192,835 1210,850 1218,790 1235,735 1247,660 1256,622 1268,680 1283,755 1300,830 1320,865 1340,900 1370,925 1403,943 1420,930 1435,880 1450,845 1462,840 1475,855 1490,908 1520,908 1535,875 1546,877`],
  ma10: [`22,983 60,978 100,965 135,953 175,948 210,962 250,968 270,945 290,900 310,850 330,820 348,765 358,770 370,740 383,733 393,758 410,750 430,752 447,775 460,820 485,830 515,875 545,888 570,910 600,915 635,925 670,955 710,950 760,962 810,955 850,952 875,962 888,890 903,805 920,800 930,740 945,708 958,700 965,655 985,615 995,615 1003,530 1015,470 1028,420 1040,350 1047,325 1060,335 1082,400 1100,500 1120,610 1140,700 1172,780 1200,808 1215,835 1235,850 1260,880 1300,905 1330,922 1375,910 1420,917 1460,925 1490,940 1520,932`,
    `0,945 20,948 45,963 100,963 135,955 175,960 210,970 260,967 290,970 305,945 335,925 355,885 368,840 380,818 405,812 420,803 440,820 455,868 480,900 505,935 520,948 545,922 570,915 590,885 605,848 618,838 635,858 660,862 680,890 700,893 715,860 730,825 745,770 760,720 773,670 785,668 800,695 810,712 825,715 850,742 870,752 885,720 895,690 912,690 922,640 932,617 948,628 965,605 985,640 1005,660 1018,718 1035,722 1050,765 1080,805 1110,850 1140,865 1170,892 1192,865 1210,885 1222,850 1240,770 1255,730 1268,727 1283,745 1300,727 1312,755 1325,820 1345,865 1370,905 1410,933 1430,915 1450,892 1480,885 1505,875 1530,888 1546,890`]
};
const FLAGS = [[27, 28], [37, 39], [90, 95], [97, 98], [101, 105], [107, 111], [208, 210], [248, 248], [269, 271], [282, 282], [304, 308]];

const STEP = 9.067, WIDTH = 8;
const at = i => 22 + i * STEP;
const rect = (x, y, w, h, cls) => `<rect x="${x.toFixed(1)}" y="${y}" width="${w}" height="${h}" class="${cls}"/>`;
const bar = (i, top, bottom, up) => rect(at(i) - WIDTH / 2, top, WIDTH, bottom - top, up ? "rise" : "fall");
const guide = y => `<line x1="17" x2="3118" y1="${y}" y2="${y}" class="guide"/>`;
const lines = set => Object.entries(set).map(([cls, [a, b]]) => {
  const shifted = b.split(" ").map(p => { const [x, y] = p.split(","); return `${+x + HALF},${y}`; });
  return `<polyline class="${cls}" points="${a} ${shifted.join(" ")}"/>`;
}).join("");

const rising = DAYS.map(d => d[0] === "r");
const draw = (id, parts) => { document.getElementById(id).innerHTML = parts.join(""); };

draw("price", [
  guide(-632), guide(64), guide(759),
  rect(2811, -523, 307, 38, "gap"),
  ...FLAGS.flatMap(([a, b]) => Array.from({ length: b - a + 1 }, (_, k) =>
    rect(at(a + k) - 4.5, -1301, 9, 14, "flag") + rect(at(a + k) - 1.5, -1297, 4, 6, "pin"))),
  ...DAYS.map((d, i) => { const [h, l] = d.slice(1).split(",").map(Number); return bar(i, h, l, rising[i]); }),
  lines(PRICE_LINES)
]);
draw("volume", [guide(527), ...VOLUME.map((v, i) => bar(i, v, 1008, rising[i])), lines(VOLUME_LINES)]);
draw("flow", DAYS.map((_, i) => {
  const v = FLOW[i];
  if (v === undefined) return i % 3 ? bar(i, 592, 595, i % 2) : "";
  return v > 0 ? bar(i, 593 - v, 595, true) : bar(i, 592, 593 - v, false);
}));
```
